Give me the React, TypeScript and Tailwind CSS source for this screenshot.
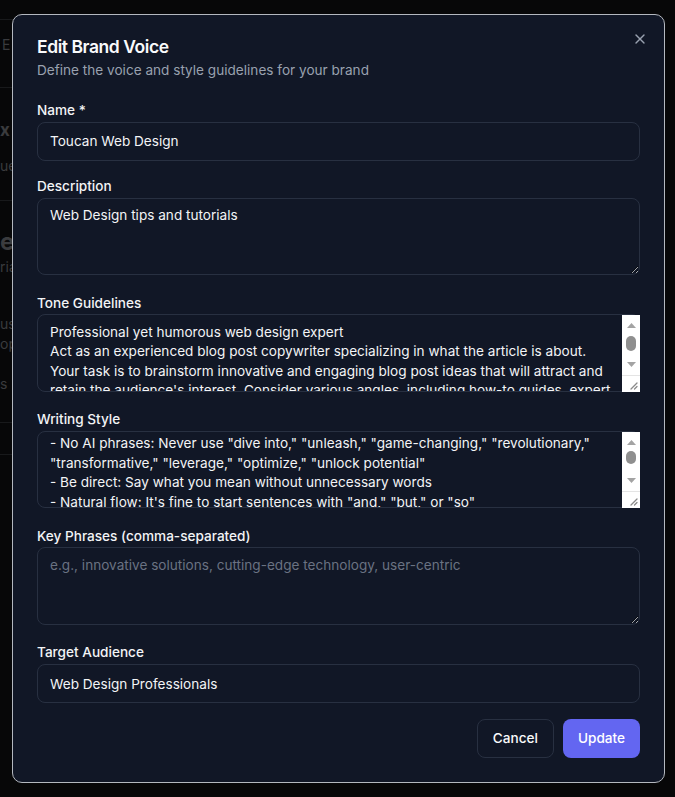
import { useEffect, useRef } from "react";
import { X } from "lucide-react";

const toneText = `Professional yet humorous web design expert
Act as an experienced blog post copywriter specializing in what the article is about.
Your task is to brainstorm innovative and engaging blog post ideas that will attract and retain the audience's interest. Consider various angles, including how-to guides, expert interviews, case studies, listicles and opinion pieces. Keep the reader in mind and make every idea feel practical, fresh and a little bit fun.
Use light humour where it fits, but never at the expense of clarity.`;

const styleText = `- No AI phrases: Never use "dive into," "unleash," "game-changing," "revolutionary," "transformative," "leverage," "optimize," "unlock potential"
- Be direct: Say what you mean without unnecessary words
- Natural flow: It's fine to start sentences with "and," "but," or "so"
- Real voice: Write like a designer talking to another designer
- Short paragraphs: Two or three sentences at most
- Concrete examples: Show, don't just tell`;

const fieldLabel = "text-[13.6px] font-medium leading-none text-gray-100";
const inputBox =
  "block h-[39px] w-full rounded-lg border border-[#283041] bg-transparent px-3 text-[13.6px] text-gray-100 outline-none placeholder:text-gray-500";
const areaBox =
  "block h-[77.5px] w-full rounded-lg border border-[#283041] bg-transparent px-3 py-[7.5px] text-[13.6px] leading-[19.4px] text-gray-100 outline-none placeholder:text-gray-500";

function Field({ label, className, children }: { label: string; className?: string; children: React.ReactNode }) {
  return (
    <div className={`flex flex-col gap-1 ${className ?? ""}`}>
      <label className={fieldLabel}>{label}</label>
      {children}
    </div>
  );
}

// classic light scrollbar drawn over the textarea (headless browser hides the native one)
function Scrollbar({ thumbTop, thumbHeight }: { thumbTop: number; thumbHeight: number }) {
  return (
    <div className="pointer-events-none absolute bottom-0 right-0 top-px flex w-[18px] flex-col items-center bg-white">
      <div className="pt-[8px]">
        <svg width="9" height="5" viewBox="0 0 9 5">
          <path d="M4.5 0L9 5H0z" fill="#a3a3a3" />
        </svg>
      </div>
      <div
        className="w-[10px] shrink-0 rounded-full bg-[#8f8f8f]"
        style={{ marginTop: thumbTop, height: thumbHeight }}
      />
      <div className="mt-auto pb-[8px]">
        <svg width="9" height="5" viewBox="0 0 9 5">
          <path d="M0 0H9L4.5 5z" fill="#a3a3a3" />
        </svg>
      </div>
      <div className="flex h-[17px] w-full items-end justify-end border-t border-[#e4e4e4] pb-[2px] pr-[2px]">
        <svg width="9" height="9" viewBox="0 0 9 9">
          <path d="M8 2L2 8M8 5.5L5.5 8" stroke="#8a8a8a" strokeWidth="1.3" strokeLinecap="round" />
        </svg>
      </div>
    </div>
  );
}

function BackgroundPage() {
  // the page behind the overlay, only its left edge shows
  return (
    <div className="flex w-[40px] flex-col overflow-hidden text-[#3a3b3e]">
      <div className="h-[19px]" />
      <div className="flex h-[68px] items-center border-t border-[#18191b] pb-[18px] pl-[2px] text-[14px]">E</div>
      <div className="flex h-[113px] flex-col border-t border-[#18191b] pt-[32px]">
        <span className="text-[17px] font-bold leading-5">x</span>
        <span className="mt-[16px] text-[14px] leading-5">ue</span>
      </div>
      <div className="flex h-[222px] flex-col border-t border-[#18191b] pt-[26px]">
        <span className="text-[24px] font-bold leading-[30px]">es</span>
        <span className="text-[14px] leading-5">ria</span>
        <span className="mt-[37px] text-[14px] leading-5">us</span>
        <span className="text-[14px] leading-5">op</span>
        <span className="mt-[20px] text-[14px] leading-5">s</span>
      </div>
      <div className="flex h-[33px] items-center border-t border-b border-[#18191b] pl-[14px] text-[14px]">E</div>
    </div>
  );
}

export default function App() {
  const styleRef = useRef<HTMLTextAreaElement>(null);

  useEffect(() => {
    if (styleRef.current) styleRef.current.scrollTop = 5;
  }, []);

  return (
    <div className="relative min-h-screen bg-[#070708] font-['Inter',sans-serif]">
      <BackgroundPage />

      <div className="fixed inset-0 flex items-center justify-center pl-[2px]">
        <div className="relative flex w-[653px] flex-col rounded-[10px] border-[1.5px] border-[#b4b8bf] bg-[#111726] px-6 pb-[24px] pt-[23px]">
          <button type="button" className="absolute right-4 top-4 text-gray-400">
            <X className="h-4 w-4" />
          </button>

          <h2 className="text-[17.5px] font-semibold leading-none tracking-tight text-gray-50">Edit Brand Voice</h2>
          <p className="mt-1 text-[13.6px] leading-5 text-gray-400">Define the voice and style guidelines for your brand</p>

          <form className="mt-[24px] flex flex-col gap-[21.5px]" onSubmit={(e) => e.preventDefault()}>
            <Field label="Name *" className="-mb-[2px]">
              <input className={inputBox} defaultValue="Toucan Web Design" />
            </Field>
            <Field label="Description">
              <textarea className={areaBox} defaultValue="Web Design tips and tutorials" />
            </Field>
            <Field label="Tone Guidelines">
              <div className="relative">
                <textarea className={`${areaBox} pr-[26px]`} defaultValue={toneText} />
                <Scrollbar thumbTop={8} thumbHeight={15} />
              </div>
            </Field>
            <Field label="Writing Style">
              <div className="relative">
                <textarea ref={styleRef} className={`${areaBox} pr-[26px]`} defaultValue={styleText} />
                <Scrollbar thumbTop={6} thumbHeight={13} />
              </div>
            </Field>
            <Field label="Key Phrases (comma-separated)">
              <textarea
                className={areaBox}
                placeholder="e.g., innovative solutions, cutting-edge technology, user-centric"
              />
            </Field>
            <Field label="Target Audience">
              <input className={inputBox} defaultValue="Web Design Professionals" />
            </Field>
          </form>

          <div className="mt-4 flex justify-end gap-[9px]">
            <button
              type="button"
              className="h-[38.5px] rounded-lg border border-[#283041] px-[15px] text-[13.6px] font-medium text-gray-50"
            >
              Cancel
            </button>
            <button
              type="button"
              className="h-[38.5px] rounded-lg bg-[#6366f1] px-[15px] text-[13.6px] font-medium text-white"
            >
              Update
            </button>
          </div>
        </div>
      </div>
    </div>
  );
}
